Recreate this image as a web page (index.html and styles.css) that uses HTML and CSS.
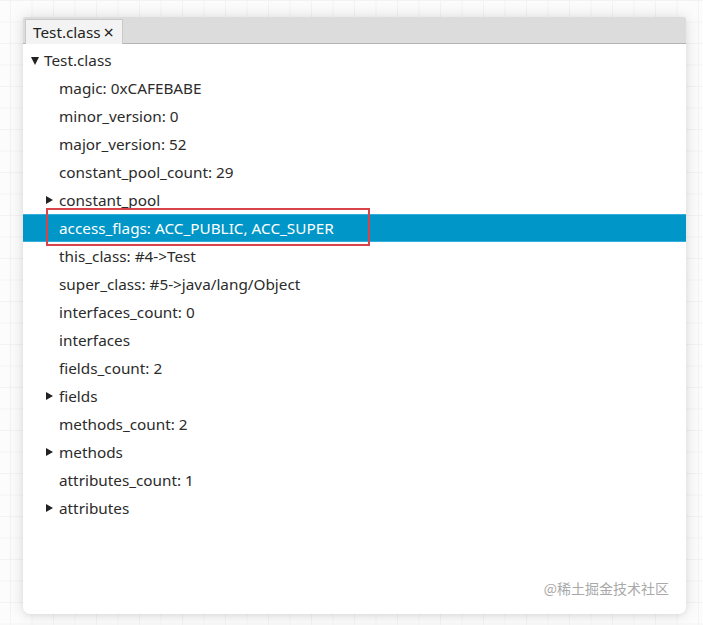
FILE: index.html
```html
<!DOCTYPE html>
<html>
<head>
<meta charset="utf-8">
<link rel="stylesheet" href="styles.css">
</head>
<body>
<div class="window">
  <div class="tabbar">
    <div class="tab"><span class="tab-title">Test.class</span><span class="tab-close">×</span></div>
  </div>
  <div class="tree">
    <div class="row root"><span class="tri down"></span><span>Test.class</span></div>
    <div class="row leaf"><span>magic: 0xCAFEBABE</span></div>
    <div class="row leaf"><span>minor_version: 0</span></div>
    <div class="row leaf"><span>major_version: 52</span></div>
    <div class="row leaf"><span>constant_pool_count: 29</span></div>
    <div class="row branch"><span class="tri right"></span><span>constant_pool</span></div>
    <div class="row leaf selected"><span>access_flags: ACC_PUBLIC, ACC_SUPER</span><span class="mark"></span></div>
    <div class="row leaf"><span>this_class: #4-&gt;Test</span></div>
    <div class="row leaf"><span>super_class: #5-&gt;java/lang/Object</span></div>
    <div class="row leaf"><span>interfaces_count: 0</span></div>
    <div class="row leaf"><span>interfaces</span></div>
    <div class="row leaf"><span>fields_count: 2</span></div>
    <div class="row branch"><span class="tri right"></span><span>fields</span></div>
    <div class="row leaf"><span>methods_count: 2</span></div>
    <div class="row branch"><span class="tri right"></span><span>methods</span></div>
    <div class="row leaf"><span>attributes_count: 1</span></div>
    <div class="row branch"><span class="tri right"></span><span>attributes</span></div>
  </div>
  <div class="watermark">@稀土掘金技术社区</div>
</div>
</body>
</html>
```

FILE: styles.css
```css
html, body {
  margin: 0;
  padding: 0;
}
body {
  width: 703px;
  height: 625px;
  box-sizing: border-box;
  padding: 17px 0 0 23px;
  background-color: #fcfcfc;
  background-image:
    linear-gradient(to right, #f3f3f3 1px, transparent 1px),
    linear-gradient(to bottom, #f3f3f3 1px, transparent 1px);
  background-size: 21.5px 21.5px;
  background-position: 10px 0;
  font-family: "Noto Sans", "Segoe UI", sans-serif;
  color: #2b2b2b;
  overflow: hidden;
}
.window {
  position: relative;
  width: 663px;
  height: 597px;
  background: #fff;
  border-radius: 2px 2px 7px 7px;
  box-shadow: 0 0 16px rgba(0,0,0,0.13), 0 2px 5px rgba(0,0,0,0.05);
  display: flex;
  flex-direction: column;
}
.tabbar {
  height: 27px;
  background: #dcdcdc;
  border-bottom: 1px solid #b4b4b4;
  display: flex;
  align-items: flex-end;
  padding-left: 2px;
  box-sizing: border-box;
  border-radius: 2px 2px 0 0;
}
.tab {
  height: 25px;
  box-sizing: border-box;
  background: #f3f3f3;
  border: 1px solid #c9c9c9;
  border-bottom: none;
  padding: 0 8px 0 7px;
  display: flex;
  align-items: center;
  font-size: 15.3px;
  color: #222;
  margin-bottom: -1px;
}
.tab-close {
  margin-left: 3px;
  font-size: 18px;
  line-height: 1;
}
.tree {
  padding-top: 2px;
  display: flex;
  flex-direction: column;
}
.row {
  height: 28px;
  display: flex;
  align-items: center;
  font-size: 15.3px;
  position: relative;
  white-space: nowrap;
}
.row.root {
  padding-left: 8px;
}
.row.leaf {
  padding-left: 36px;
}
.row.branch {
  padding-left: 23px;
}
.tri {
  display: inline-block;
  width: 0;
  height: 0;
  flex: none;
}
.tri.down {
  border-left: 4.5px solid transparent;
  border-right: 4.5px solid transparent;
  border-top: 8px solid #222;
  margin-right: 5px;
  margin-top: 1px;
}
.tri.right {
  border-top: 4.5px solid transparent;
  border-bottom: 4.5px solid transparent;
  border-left: 7px solid #222;
  margin-right: 6px;
  margin-top: -1px;
}
.row.selected {
  background: #0096c8;
  color: #fff;
  border-top: 1px solid #33aedb;
  border-bottom: 1px solid #33aedb;
  box-sizing: border-box;
}
.mark {
  position: absolute;
  left: 23px;
  top: -7px;
  width: 324px;
  height: 38px;
  box-sizing: border-box;
  border: 2px solid #d8434b;
}
.watermark {
  position: absolute;
  right: 17px;
  bottom: 16px;
  font-family: "Noto Sans CJK SC", sans-serif;
  font-size: 14px;
  color: #a9a9a9;
}
```
